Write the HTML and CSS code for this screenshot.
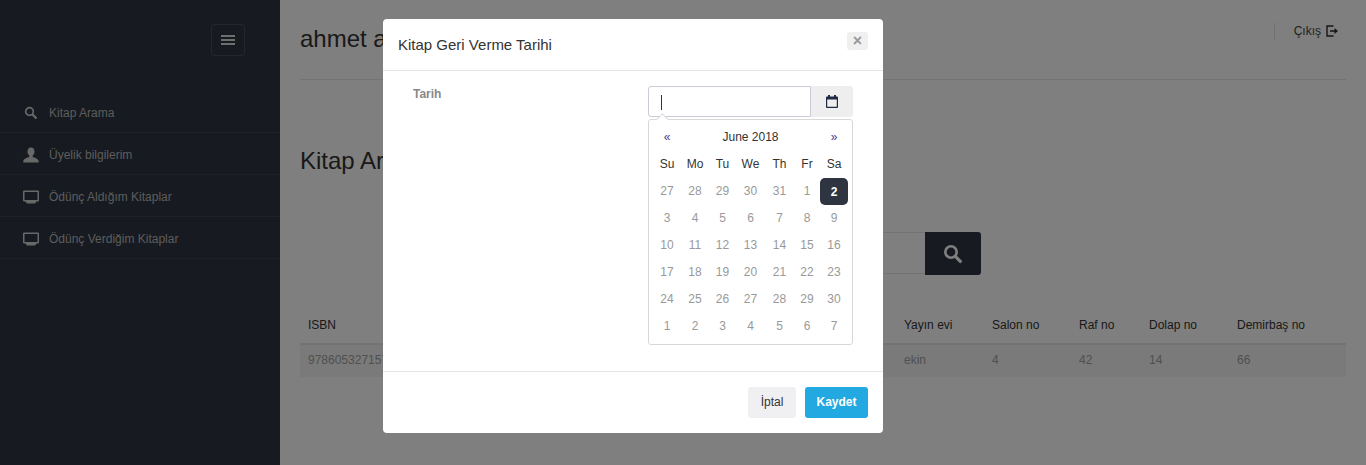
FILE: index.html

```html
<!doctype html>
<html>
<head>
    <title>Kitap Arama</title>
    <meta charset="utf-8" />
    <link rel="stylesheet" href="styles.css">
</head>
<body>
<div class="page">
    <aside class="sidebar">
        <div class="sidebar-top">
            <button class="menu-toggle">
                <svg width="14" height="10" viewBox="0 0 14 10"><path d="M0 0h14v2H0zM0 4h14v2H0zM0 8h14v2H0z" fill="#ddd"/></svg>
            </button>
        </div>
        <ul class="nav">
            <li>
                <svg class="nav-icon" viewBox="0 0 16 16"><circle cx="6.500" cy="6.500" r="3.800" fill="none" stroke="#d0d0d0" stroke-width="1.700"/><path d="M9.300 9.300l4.200 4.200" stroke="#d0d0d0" stroke-width="2.200"/></svg>
                Kitap Arama
            </li>
            <li>
                <svg class="nav-icon" viewBox="0 0 16 16"><path d="M8 .5c2.300 0 3.500 1.700 3.500 4 0 1.800-.8 3.300-1.800 4v1.500c2 .8 6 1.500 6 4.500v1H.3v-1c0-3 4-3.700 6-4.500V8.500c-1-.7-1.800-2.200-1.800-4 0-2.300 1.200-4 3.500-4z" fill="#d0d0d0"/></svg>
                Üyelik bilgilerim
            </li>
            <li>
                <svg class="nav-icon" viewBox="0 0 16 16"><path d="M1 1.500h14a1 1 0 0 1 1 1v9a1 1 0 0 1-1 1H1a1 1 0 0 1-1-1v-9a1 1 0 0 1 1-1zm.5 1.500v8h13V3zM2.500 12.500h11l-1.500 2H4z" fill="#d0d0d0" fill-rule="evenodd"/></svg>
                Ödünç Aldığım Kitaplar
            </li>
            <li>
                <svg class="nav-icon" viewBox="0 0 16 16"><path d="M1 1.500h14a1 1 0 0 1 1 1v9a1 1 0 0 1-1 1H1a1 1 0 0 1-1-1v-9a1 1 0 0 1 1-1zm.5 1.500v8h13V3zM2.500 12.500h11l-1.500 2H4z" fill="#d0d0d0" fill-rule="evenodd"/></svg>
                Ödünç Verdiğim Kitaplar
            </li>
        </ul>
    </aside>

    <main class="content">
        <header class="topbar">
            <h1>ahmet a</h1>
            <a class="logout">
                Çıkış
                <svg width="12" height="12" viewBox="0 0 12 12"><path d="M7.500 1H1v10h6.500" fill="none" stroke="#2b2b2b" stroke-width="1.400"/><path d="M4 5.300h4.500V3L12 6 8.500 9V6.700H4z" fill="#2b2b2b"/></svg>
            </a>
        </header>

        <h2 class="section-title">Kitap Arama</h2>

        <div class="search">
            <div class="search-input"></div>
            <button class="search-btn">
                <svg width="20" height="20" viewBox="0 0 20 20"><circle cx="8" cy="8" r="5.700" fill="none" stroke="#fff" stroke-width="2.600"/><path d="M12.300 12.300l6 6" stroke="#fff" stroke-width="3.200"/></svg>
            </button>
        </div>

        <table class="books">
            <colgroup>
                <col class="c-isbn"><col class="c-publisher"><col class="c-hall"><col class="c-shelf"><col class="c-case"><col class="c-stock">
            </colgroup>
            <thead>
                <tr><th>ISBN</th><th>Yayın evi</th><th>Salon no</th><th>Raf no</th><th>Dolap no</th><th>Demirbaş no</th></tr>
            </thead>
            <tbody>
                <tr><td>9786053271570</td><td>ekin</td><td>4</td><td>42</td><td>14</td><td>66</td></tr>
            </tbody>
        </table>
    </main>
</div>

<div class="overlay">
    <div class="modal">
        <div class="modal-header">
            <h4>Kitap Geri Verme Tarihi</h4>
            <button class="close">×</button>
        </div>
        <div class="modal-body">
            <label class="field-label">Tarih</label>
            <div class="date-field">
                <div class="input-group">
                    <div class="date-input"><span class="caret"></span></div>
                    <div class="addon">
                        <svg width="12" height="13" viewBox="0 0 12 13"><path d="M2 0h2v1.500h4V0h2v1.500h1a1 1 0 0 1 1 1V12a1 1 0 0 1-1 1H1a1 1 0 0 1-1-1V2.500a1 1 0 0 1 1-1h1zM1.200 4.500v7.300h9.600V4.500z" fill="#1f2a44" fill-rule="evenodd"/></svg>
                    </div>
                </div>
                <div class="datepicker">
                    <table class="calendar">
                        <colgroup>
                            <col class="d1"><col class="d2"><col class="d3"><col class="d4"><col class="d5"><col class="d6"><col class="d7">
                        </colgroup>
                        <thead>
                            <tr class="month-row"><th class="arrow">«</th><th colspan="5" class="month">June 2018</th><th class="arrow">»</th></tr>
                            <tr><th>Su</th><th>Mo</th><th>Tu</th><th>We</th><th>Th</th><th>Fr</th><th>Sa</th></tr>
                        </thead>
                        <tbody>
                            <tr><td>27</td><td>28</td><td>29</td><td>30</td><td>31</td><td>1</td><td class="active">2</td></tr>
                            <tr><td>3</td><td>4</td><td>5</td><td>6</td><td>7</td><td>8</td><td>9</td></tr>
                            <tr><td>10</td><td>11</td><td>12</td><td>13</td><td>14</td><td>15</td><td>16</td></tr>
                            <tr><td>17</td><td>18</td><td>19</td><td>20</td><td>21</td><td>22</td><td>23</td></tr>
                            <tr><td>24</td><td>25</td><td>26</td><td>27</td><td>28</td><td>29</td><td>30</td></tr>
                            <tr><td>1</td><td>2</td><td>3</td><td>4</td><td>5</td><td>6</td><td>7</td></tr>
                        </tbody>
                    </table>
                </div>
            </div>
        </div>
        <div class="modal-footer">
            <button class="btn btn-cancel">İptal</button>
            <button class="btn btn-save">Kaydet</button>
        </div>
    </div>
</div>
</body>
</html>
```

FILE: styles.css

```css
* {
    box-sizing: border-box;
}

html, body {
    margin: 0;
    height: 100%;
    overflow: hidden;
}

body {
    font-family: "Liberation Sans", Arial, sans-serif;
    font-size: 12px;
    color: #333;
    background: #fff;
}

button {
    font-family: inherit;
}

.page {
    display: flex;
    height: 465px;
}

/* sidebar */
.sidebar {
    width: 280px;
    flex-shrink: 0;
    background: #2f3540;
}

.sidebar-top {
    display: flex;
    justify-content: flex-end;
    height: 91px;
    padding: 24px 35px 0 0;
}

.menu-toggle {
    display: flex;
    align-items: center;
    justify-content: center;
    width: 34px;
    height: 32px;
    padding: 0;
    background: transparent;
    border: 1px solid #484d57;
    border-radius: 3px;
}

.nav {
    list-style: none;
    margin: 0;
    padding: 0;
}

.nav li {
    display: flex;
    align-items: center;
    height: 42px;
    padding: 2px 0 0 23px;
    color: #b8b8b8;
    border-bottom: 1px solid #3d434e;
}

.nav-icon {
    width: 16px;
    height: 16px;
    margin-right: 10px;
}

/* main */
.content {
    flex: 1;
    padding: 0 20px;
    min-width: 0;
}

.topbar {
    display: flex;
    justify-content: space-between;
    height: 80px;
    border-bottom: 1px solid #e7e7e7;
}

.topbar h1 {
    margin: 0;
    padding-top: 25px;
    font-size: 24px;
    line-height: 28px;
    font-weight: 400;
}

.logout {
    display: flex;
    align-items: center;
    gap: 5px;
    height: 17px;
    margin-top: 23px;
    padding: 0 8px 2px 19px;
    border-left: 1px solid #e0e0e0;
    color: #444;
}

.section-title {
    margin: 67px 0 0;
    font-size: 24px;
    line-height: 28px;
    font-weight: 400;
}

.search {
    display: flex;
    justify-content: center;
    margin-top: 57px;
}

.search-input {
    width: 260px;
    height: 42px;
    border: 1px solid #e5e6e7;
    border-right: 0;
}

.search-btn {
    display: flex;
    align-items: center;
    justify-content: center;
    width: 56px;
    height: 43px;
    padding: 0;
    border: 0;
    background: #2f3540;
    border-radius: 0 3px 3px 0;
}

.books {
    width: 100%;
    margin-top: 33px;
    border-collapse: collapse;
    table-layout: fixed;
}

.c-isbn { width: 596px; }
.c-publisher { width: 88px; }
.c-hall { width: 87px; }
.c-shelf { width: 70px; }
.c-case { width: 88px; }
.c-stock { width: 117px; }

.books th {
    height: 36px;
    padding: 0 8px 2px;
    text-align: left;
    font-weight: 400;
    color: #333;
    border-bottom: 2px solid #e7e7e7;
}

.books td {
    height: 33px;
    padding: 0 8px 2px;
    color: #a0a0a0;
    background: #f5f5f5;
}

/* modal */
.overlay {
    position: fixed;
    top: 0;
    left: 0;
    right: 0;
    bottom: 0;
    background: rgba(0, 0, 0, 0.5);
}

.modal {
    width: 500px;
    height: 414px;
    margin: 19px 0 0 383px;
    background: #fff;
    border-radius: 4px;
}

.modal-header {
    display: flex;
    justify-content: space-between;
    height: 52px;
    padding: 13px 15px 0;
    border-bottom: 1px solid #e5e5e5;
}

.modal-header h4 {
    margin: 0;
    padding-top: 3px;
    font-size: 15px;
    line-height: 20px;
    font-weight: 400;
    color: #333;
}

.close {
    width: 21px;
    height: 18px;
    padding: 0;
    border: 0;
    border-radius: 3px;
    background: #f0f0f0;
    color: #999;
    font-size: 16px;
    font-weight: 700;
    line-height: 18px;
}

.modal-body {
    display: flex;
    height: 301px;
    padding: 15px 30px 0;
    border-bottom: 1px solid #e5e5e5;
}

.field-label {
    width: 235px;
    padding-top: 1px;
    font-weight: 700;
    line-height: 14px;
    color: #888;
}

.date-field {
    width: 205px;
}

.input-group {
    display: flex;
    height: 31px;
}

.date-input {
    flex: 1;
    padding: 8px 12px;
    border: 1px solid #c9cbd9;
    border-radius: 3px 0 0 3px;
}

.caret {
    display: block;
    width: 1px;
    height: 15px;
    background: #333;
}

.addon {
    display: flex;
    align-items: center;
    justify-content: center;
    width: 42px;
    background: #eee;
    border-radius: 0 3px 3px 0;
}

.datepicker {
    position: relative;
    height: 226px;
    margin-top: 2px;
    padding: 4px;
    background: #fff;
    border: 1px solid #d8d8d8;
    border-radius: 3px;
}

.datepicker:before {
    content: "";
    position: absolute;
    top: -5px;
    left: 9px;
    width: 8px;
    height: 8px;
    background: #fff;
    border-top: 1px solid #d8d8d8;
    border-left: 1px solid #d8d8d8;
    transform: rotate(45deg);
}

.calendar {
    position: relative;
    border-collapse: collapse;
    table-layout: fixed;
    width: 195px;
}

.d1, .d2, .d7 { width: 28px; }
.d3 { width: 27px; }
.d4, .d5 { width: 29px; }
.d6 { width: 26px; }

.calendar th, .calendar td {
    height: 27px;
    padding: 0 0 2px;
    text-align: center;
}

.calendar th {
    font-weight: 400;
    color: #333;
}

.calendar td {
    color: #999;
}

.calendar .arrow {
    color: #4a3a8c;
}

.calendar .active {
    background: #2f3540;
    color: #fff;
    font-weight: 700;
    border-radius: 5px;
    padding-bottom: 0;
}

.modal-footer {
    display: flex;
    justify-content: flex-end;
    gap: 9px;
    padding: 15px 15px 0;
}

.btn {
    height: 31px;
    padding: 0 0 2px;
    border: 0;
    border-radius: 3px;
    font-size: 12px;
}

.btn-cancel {
    width: 48px;
    background: #f0f0f2;
    color: #333;
}

.btn-save {
    width: 63px;
    background: #23a9e1;
    color: #fff;
    font-weight: 700;
}
```
